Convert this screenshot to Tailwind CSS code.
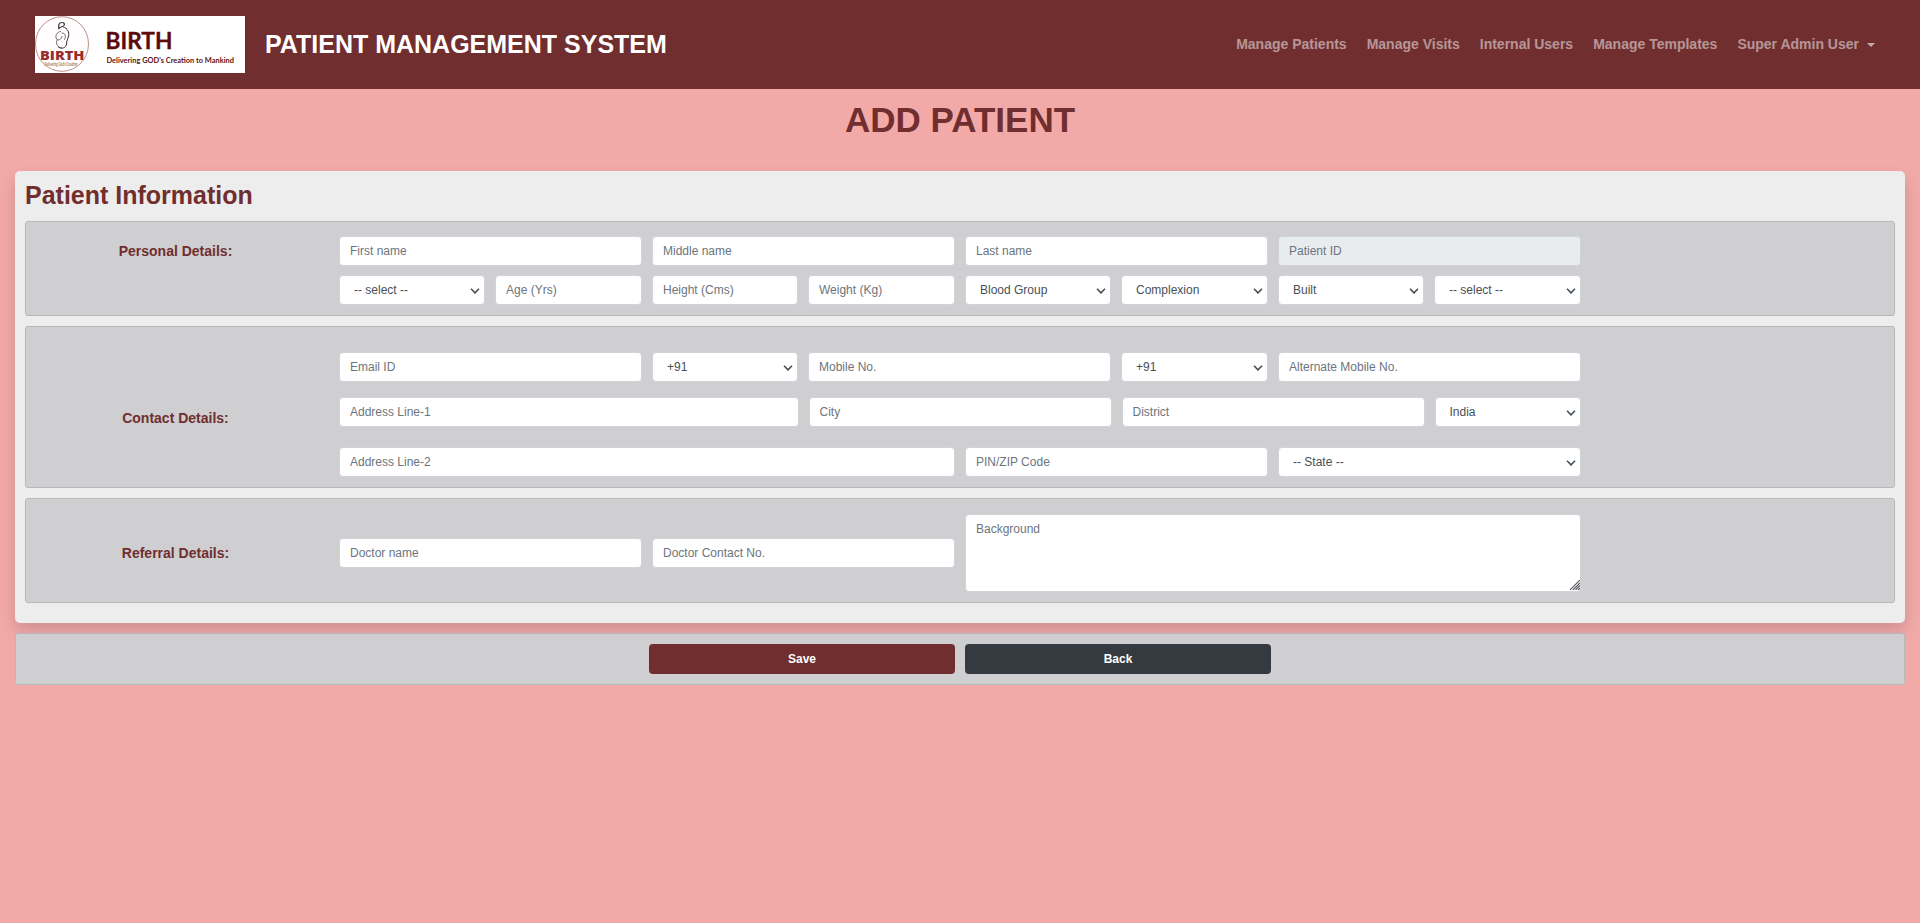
<!DOCTYPE html>
<html lang="en">
<head>
<meta charset="utf-8">
<title>Patient Management System</title>
<script src="https://cdn.jsdelivr.net/npm/@tailwindcss/browser@4"></script>
</head>
<body class="min-h-screen bg-[#f2aaa8] font-['Liberation_Sans',Arial,sans-serif] text-[14px] leading-[21px] text-[#702e2f]">
<svg class="hidden">
  <symbol id="chevron" viewBox="0 0 10 6"><path d="M1 .7 5 4.900 9 .7" fill="none" stroke="#495057" stroke-width="1.600"/></symbol>
</svg>
<nav class="flex h-[89px] items-center bg-[#702e2f] pr-[45px] pl-[35px]">
  <svg class="h-[57px] w-[210px] shrink-0" viewBox="0 0 210 57">
    <rect width="210" height="57" fill="#fff"/>
    <ellipse cx="27" cy="28" rx="26.5" ry="27.3" fill="#fffdfd" stroke="#b98080" stroke-width=".9"/>
    <g fill="none" stroke="#333" stroke-linecap="round">
      <path d="M24 13c-1-4 0-6.500 3-6.500 2 0 3 1.500 2 3-1.200 1.500-3.500 1-4.500 2.500" stroke-width="1.200"/>
      <path d="M28.500 11c4 1.500 6 5 5 9-.8 3.500-2 5-2 8-.3 4-5 5.500-8 3" stroke-width="1"/>
      <path d="M25.500 15.500c-4 .5-5.500 4.500-4 7.500 1.800 2 5 .5 5.500-2.500M22 24c-1.500 4 .5 7.500 4.500 8M27 17c3.500 0 4.500 3.500 2.500 6.500" stroke-width=".7"/>
    </g>
    <text x="5" y="44" textLength="44.500" lengthAdjust="spacingAndGlyphs" font-family="Open Sans, sans-serif" font-weight="800" font-size="12.500" fill="#9a2e2e">BIRTH</text>
    <text x="9.500" y="50" textLength="33" lengthAdjust="spacingAndGlyphs" font-family="Lato, sans-serif" font-weight="700" font-size="5" fill="#a07850">Delivering God's Creation</text>
    <text x="70.500" y="32.500" textLength="67" lengthAdjust="spacingAndGlyphs" font-family="Lato, sans-serif" font-weight="700" font-size="23" fill="#5c0a0c" stroke="#5c0a0c" stroke-width=".3">BIRTH</text>
    <text x="71.500" y="47" textLength="127.500" lengthAdjust="spacingAndGlyphs" font-family="Lato, sans-serif" font-weight="700" font-size="8" fill="#5c1416">Delivering GOD's Creation to Mankind</text>
  </svg>
  <span class="ml-5 text-[25px] font-bold text-white">PATIENT MANAGEMENT SYSTEM</span>
  <div class="ml-auto flex items-center gap-5 font-bold text-white/50">
    <a>Manage Patients</a>
    <a>Manage Visits</a>
    <a>Internal Users</a>
    <a>Manage Templates</a>
    <a class="flex items-center gap-2">Super Admin User <span class="border-x-4 border-t-4 border-x-transparent border-t-white/60"></span></a>
  </div>
</nav>

<main class="px-[15px]">
  <h1 class="flex h-[82px] justify-center pt-[10px] text-[35px] leading-[42px] font-bold">ADD PATIENT</h1>

  <section class="relative h-[452px] rounded-[5px] bg-[#ededed] px-[10px] pt-[10px] shadow-[0_8px_16px_rgba(0,0,0,0.15)]">
    <h2 class="h-10 text-[25px] leading-[29px] font-bold">Patient Information</h2>

    <div class="flex h-[95px] rounded-[3px] border border-[#b7b8b9] bg-[#cfcfd1] pt-[14px]">
      <div class="w-[313px] pr-[14px] text-center leading-[30px] font-bold">Personal Details:</div>
      <div class="grid h-[69px] grid-cols-[146px_147px_146px_147px_146px_147px_146px_147px] gap-x-[10px] gap-y-[9px] text-[12px] text-[#495057]">
        <input placeholder="First name" class="col-span-2 h-[30px] min-w-0 rounded-[4px] border border-[#ced4da] bg-white px-[10px] placeholder:text-[#6c757d]">
        <input placeholder="Middle name" class="col-span-2 h-[30px] min-w-0 rounded-[4px] border border-[#ced4da] bg-white px-[10px] placeholder:text-[#6c757d]">
        <input placeholder="Last name" class="col-span-2 h-[30px] min-w-0 rounded-[4px] border border-[#ced4da] bg-white px-[10px] placeholder:text-[#6c757d]">
        <input placeholder="Patient ID" readonly class="col-span-2 h-[30px] min-w-0 rounded-[4px] border border-[#ced4da] bg-[#e9ecef] px-[10px] placeholder:text-[#6c757d]">
        <div class="relative"><select class="h-[30px] w-full appearance-none rounded-[4px] border border-[#ced4da] bg-white pl-[14px]"><option>-- select --</option></select><svg class="pointer-events-none absolute top-[13px] right-[5px] h-[6px] w-[10px]"><use href="#chevron"/></svg></div>
        <input placeholder="Age (Yrs)" class="h-[30px] min-w-0 rounded-[4px] border border-[#ced4da] bg-white px-[10px] placeholder:text-[#6c757d]">
        <input placeholder="Height (Cms)" class="h-[30px] min-w-0 rounded-[4px] border border-[#ced4da] bg-white px-[10px] placeholder:text-[#6c757d]">
        <input placeholder="Weight (Kg)" class="h-[30px] min-w-0 rounded-[4px] border border-[#ced4da] bg-white px-[10px] placeholder:text-[#6c757d]">
        <div class="relative"><select class="h-[30px] w-full appearance-none rounded-[4px] border border-[#ced4da] bg-white pl-[14px]"><option>Blood Group</option></select><svg class="pointer-events-none absolute top-[13px] right-[5px] h-[6px] w-[10px]"><use href="#chevron"/></svg></div>
        <div class="relative"><select class="h-[30px] w-full appearance-none rounded-[4px] border border-[#ced4da] bg-white pl-[14px]"><option>Complexion</option></select><svg class="pointer-events-none absolute top-[13px] right-[5px] h-[6px] w-[10px]"><use href="#chevron"/></svg></div>
        <div class="relative"><select class="h-[30px] w-full appearance-none rounded-[4px] border border-[#ced4da] bg-white pl-[14px]"><option>Built</option></select><svg class="pointer-events-none absolute top-[13px] right-[5px] h-[6px] w-[10px]"><use href="#chevron"/></svg></div>
        <div class="relative"><select class="h-[30px] w-full appearance-none rounded-[4px] border border-[#ced4da] bg-white pl-[14px]"><option>-- select --</option></select><svg class="pointer-events-none absolute top-[13px] right-[5px] h-[6px] w-[10px]"><use href="#chevron"/></svg></div>
      </div>
    </div>

    <div class="mt-[10px] flex h-[162px] rounded-[3px] border border-[#b7b8b9] bg-[#cfcfd1] pt-[25px]">
      <div class="w-[313px] pt-[56px] pr-[14px] text-center font-bold">Contact Details:</div>
      <div class="flex w-[1242px] flex-col text-[12px] text-[#495057]">
        <div class="grid grid-cols-[303px_146px_303px_147px_303px] gap-x-[10px]">
          <input placeholder="Email ID" class="h-[30px] min-w-0 rounded-[4px] border border-[#ced4da] bg-white px-[10px] placeholder:text-[#6c757d]">
          <div class="relative"><select class="h-[30px] w-full appearance-none rounded-[4px] border border-[#ced4da] bg-white pl-[14px]"><option>+91</option></select><svg class="pointer-events-none absolute top-[13px] right-[5px] h-[6px] w-[10px]"><use href="#chevron"/></svg></div>
          <input placeholder="Mobile No." class="h-[30px] min-w-0 rounded-[4px] border border-[#ced4da] bg-white px-[10px] placeholder:text-[#6c757d]">
          <div class="relative"><select class="h-[30px] w-full appearance-none rounded-[4px] border border-[#ced4da] bg-white pl-[14px]"><option>+91</option></select><svg class="pointer-events-none absolute top-[13px] right-[5px] h-[6px] w-[10px]"><use href="#chevron"/></svg></div>
          <input placeholder="Alternate Mobile No." class="h-[30px] min-w-0 rounded-[4px] border border-[#ced4da] bg-white px-[10px] placeholder:text-[#6c757d]">
        </div>
        <div class="mt-[15px] grid grid-cols-[460px_303px_303px_1fr] gap-x-[10px]">
          <input placeholder="Address Line-1" class="h-[30px] min-w-0 rounded-[4px] border border-[#ced4da] bg-white px-[10px] placeholder:text-[#6c757d]">
          <input placeholder="City" class="h-[30px] min-w-0 rounded-[4px] border border-[#ced4da] bg-white px-[9.5px] placeholder:text-[#6c757d]">
          <input placeholder="District" class="h-[30px] min-w-0 rounded-[4px] border border-[#ced4da] bg-white px-[9.5px] placeholder:text-[#6c757d]">
          <div class="relative"><select class="h-[30px] w-full appearance-none rounded-[4px] border border-[#ced4da] bg-white pl-[13.5px]"><option>India</option></select><svg class="pointer-events-none absolute top-[13px] right-[5px] h-[6px] w-[10px]"><use href="#chevron"/></svg></div>
        </div>
        <div class="mt-5 grid grid-cols-[616px_303px_303px] gap-x-[10px]">
          <input placeholder="Address Line-2" class="h-[30px] min-w-0 rounded-[4px] border border-[#ced4da] bg-white px-[10px] placeholder:text-[#6c757d]">
          <input placeholder="PIN/ZIP Code" class="h-[30px] min-w-0 rounded-[4px] border border-[#ced4da] bg-white px-[10px] placeholder:text-[#6c757d]">
          <div class="relative"><select class="h-[30px] w-full appearance-none rounded-[4px] border border-[#ced4da] bg-white pl-[14px]"><option>-- State --</option></select><svg class="pointer-events-none absolute top-[13px] right-[5px] h-[6px] w-[10px]"><use href="#chevron"/></svg></div>
        </div>
      </div>
    </div>

    <div class="mt-[10px] flex h-[105px] rounded-[3px] border border-[#b7b8b9] bg-[#cfcfd1] pt-[15px]">
      <div class="w-[313px] pr-[14px] text-center leading-[78px] font-bold">Referral Details:</div>
      <div class="grid h-[78px] w-[1242px] grid-cols-4 items-center gap-x-[10px] text-[12px] text-[#495057]">
        <input placeholder="Doctor name" class="h-[30px] min-w-0 rounded-[4px] border border-[#ced4da] bg-white px-[10px] placeholder:text-[#6c757d]">
        <input placeholder="Doctor Contact No." class="h-[30px] min-w-0 rounded-[4px] border border-[#ced4da] bg-white px-[10px] placeholder:text-[#6c757d]">
        <div class="relative col-span-2 h-[78px]">
          <textarea placeholder="Background" class="block h-full w-full resize-none rounded-[4px] border border-[#ced4da] bg-white px-[10px] py-[5px] leading-[18px] placeholder:text-[#6c757d]"></textarea>
          <svg class="pointer-events-none absolute right-[1px] bottom-[2px] h-[10px] w-[10px]" viewBox="0 0 10 10"><path d="M0 10 10 0M3 10 10 3M5.500 10 10 5.500M8 10 10 8" stroke="#555" stroke-width="1.100"/></svg>
        </div>
      </div>
    </div>
  </section>

  <div class="relative mt-[10px] flex h-[52px] items-center justify-center gap-[10px] rounded-[3px] border border-[#b7b8b9] bg-[#cfcfd1] text-[12px] font-bold text-white">
    <button class="h-[30px] w-[306px] rounded-[4px] bg-[#702e2f]">Save</button>
    <button class="h-[30px] w-[306px] rounded-[4px] bg-[#343a40]">Back</button>
  </div>
</main>
</body>
</html>
